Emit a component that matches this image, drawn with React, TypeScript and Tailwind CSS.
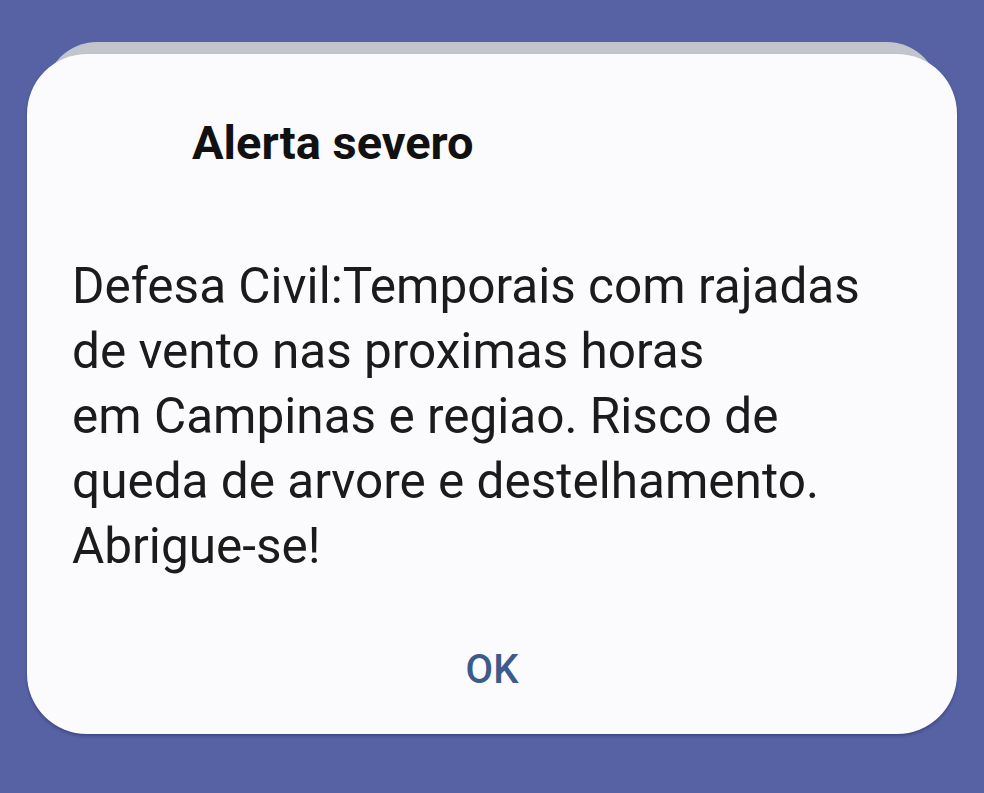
import React from 'react';

const lines = [
  'Defesa Civil:Temporais com rajadas',
  'de vento nas proximas horas',
  'em Campinas e regiao. Risco de',
  'queda de arvore e destelhamento.',
  'Abrigue-se!',
];

const App: React.FC = () => {
  return (
    <div
      className="w-[984px] h-[793px] overflow-hidden bg-[#5662a4] pt-[42px] px-[45px]"
      style={{ fontFamily: 'Roboto, "Noto Sans", sans-serif' }}
    >
      {/* card stacked behind the alert */}
      <div className="rounded-[52px] bg-[#c2c5cb] pt-[12px]">
        <div className="-mx-[18px] rounded-[60px] bg-[#fbfbfd] shadow-[0_2px_3px_rgba(20,25,70,0.35)] flex flex-col">
          <div className="pt-[61px] pl-[165px] text-[47px] leading-[56px] font-bold text-[#111]">
            Alerta severo
          </div>

          <div className="mt-[83px] pl-[45px] text-[49.5px] leading-[65px] text-[#1b1b1b]">
            {lines.map((l) => (
              <div key={l} className="whitespace-nowrap">{l}</div>
            ))}
          </div>

          <div className="mt-[67px] pb-[40px] flex justify-center">
            <button className="text-[40px] leading-[48px] font-medium text-[#3d5a8c]">OK</button>
          </div>
        </div>
      </div>
    </div>
  );
};

export default App;
